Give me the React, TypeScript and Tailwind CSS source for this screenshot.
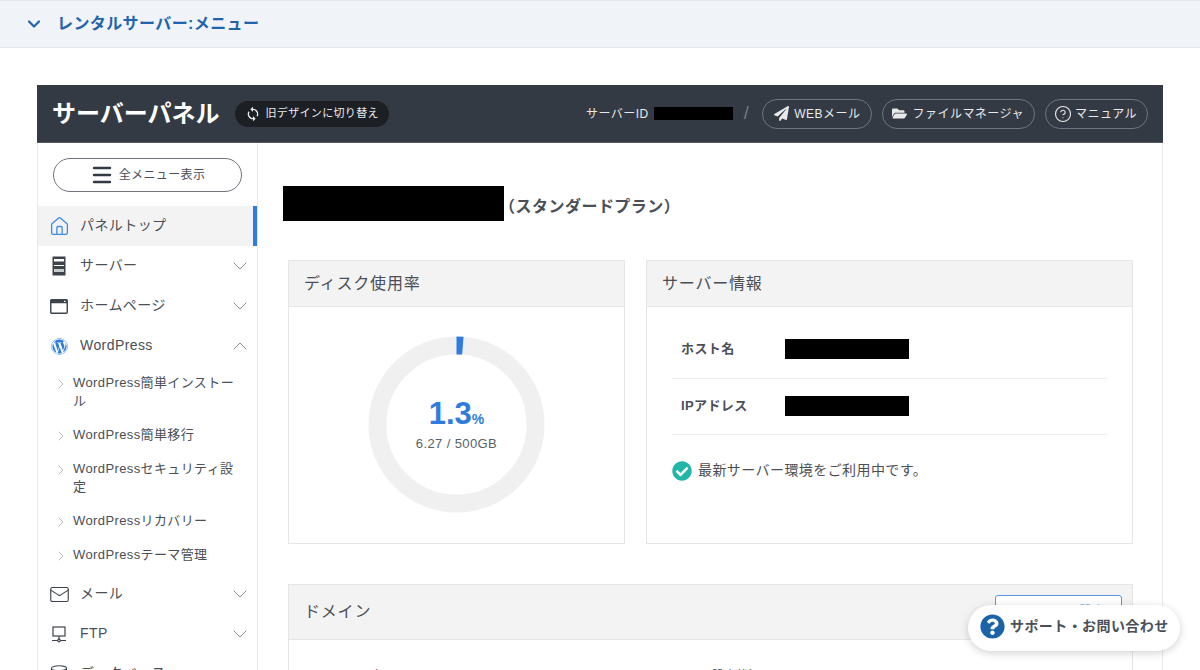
import { ChevronDown, ChevronRight, ChevronUp, CircleHelp, Database, House, Mail, Menu } from "lucide-react";
import { FaCheckCircle, FaFolderOpen, FaPaperPlane, FaQuestionCircle, FaWordpress } from "react-icons/fa";
import { MdSync } from "react-icons/md";

const subItems = [
  "WordPress簡単インストール",
  "WordPress簡単移行",
  "WordPressセキュリティ設定",
  "WordPressリカバリー",
  "WordPressテーマ管理",
];

function ServerIcon() {
  return (
    <svg width="14" height="20" viewBox="0 0 14 20">
      <rect x="0.5" y="0.5" width="13" height="19" fill="#3d434b" />
      <rect x="2" y="3" width="10" height="2.5" fill="#fff" />
      <rect x="2" y="9" width="10" height="1" fill="#fff" />
      <rect x="2" y="13" width="10" height="3" fill="#c9cbce" />
    </svg>
  );
}

function WindowIcon() {
  return (
    <svg width="18" height="15" viewBox="0 0 18 15">
      <rect x="0.75" y="0.75" width="16.5" height="13.5" rx="1" fill="#fff" stroke="#3d434b" strokeWidth="1.4" />
      <rect x="0.75" y="0.75" width="16.5" height="3.5" fill="#3d434b" />
      <rect x="14" y="1.8" width="1.5" height="1.2" fill="#fff" />
    </svg>
  );
}

function FtpIcon() {
  return (
    <svg width="16" height="17" viewBox="0 0 16 17" fill="none" stroke="#3d434b" strokeWidth="1.2">
      <rect x="2" y="1" width="12" height="9" />
      <path d="M8 10v3.5M1 14.5h14" />
      <circle cx="8" cy="14.5" r="1.3" fill="#fff" />
    </svg>
  );
}

function NavRow({ icon, label, open }: { icon: React.ReactNode; label: string; open?: boolean }) {
  return (
    <div className="flex h-10 items-center pr-[5px] text-[14px] tracking-[0.03em] text-[#4a4f57]">
      <div className="flex w-[42px] shrink-0 justify-center">{icon}</div>
      <span className="flex-1 pb-[2px]">{label}</span>
      {open ? (
        <ChevronUp size={24} strokeWidth={1} className="text-[#888]" />
      ) : (
        <ChevronDown size={24} strokeWidth={1} className="text-[#888]" />
      )}
    </div>
  );
}

function Sidebar() {
  return (
    <aside className="w-[220px] shrink-0 border-r border-[#e8e9eb]">
      <div className="px-[15px] pt-[15px] pb-[14px]">
        <div className="flex h-[34px] items-center justify-center gap-[5px] rounded-full border border-[#6f747b] text-[12px] tracking-[0.03em] text-[#4a4f57]">
          <Menu size={24} strokeWidth={2.4} className="text-[#343a43]" />
          <span>全メニュー表示</span>
        </div>
      </div>
      <div className="flex h-10 items-center border-r-[4px] border-[#2f7be0] bg-[#f3f3f3] text-[14px] tracking-[0.03em] text-[#4a4f57]">
        <div className="flex w-[42px] shrink-0 justify-center">
          <House size={21} strokeWidth={1.5} className="text-[#3f8ae8]" />
        </div>
        <span className="pb-[2px]">パネルトップ</span>
      </div>
      <NavRow icon={<ServerIcon />} label="サーバー" />
      <NavRow icon={<WindowIcon />} label="ホームページ" />
      <NavRow icon={<FaWordpress size={17} className="text-[#2f7be0]" />} label="WordPress" open />
      <div className="pb-[2px]">
        {subItems.map((item) => (
          <div key={item} className="flex py-[8px] pr-[20px] pl-[15px] text-[13px] leading-[18px] tracking-[0.03em] text-[#4a4f57]">
            <ChevronRight size={16} strokeWidth={1} className="mt-[2px] mr-[4px] shrink-0 text-[#999]" />
            <span>{item}</span>
          </div>
        ))}
      </div>
      <NavRow icon={<Mail size={21} strokeWidth={1.3} className="text-[#3d434b]" />} label="メール" />
      <NavRow icon={<FtpIcon />} label="FTP" />
      <NavRow icon={<Database size={20} strokeWidth={1.3} className="text-[#3d434b]" />} label="データベース" />
    </aside>
  );
}

function Card({ title, className, children }: { title: string; className: string; children: React.ReactNode }) {
  return (
    <section className={`border border-[#e6e6e6] ${className}`}>
      <h2 className="flex h-[46px] items-center border-b border-[#e6e6e6] bg-[#f3f3f3] px-[15px] text-[16px] font-normal tracking-[0.05em] text-[#4a4f57]">
        {title}
      </h2>
      {children}
    </section>
  );
}

function DiskChart() {
  return (
    <div className="relative flex h-[234px] items-center justify-center">
      <svg width="177" height="177" viewBox="0 0 178 178">
        <circle cx="89" cy="89" r="79.5" fill="none" stroke="#f0f0f0" strokeWidth="18" />
        <circle
          cx="89"
          cy="89"
          r="79.5"
          fill="none"
          stroke="#2f7be0"
          strokeWidth="18"
          strokeDasharray="6.5 493"
          transform="rotate(-90 89 89)"
        />
      </svg>
      <div className="absolute inset-0 flex flex-col items-center justify-center pt-[2px]">
        <div className="font-bold leading-[32px] text-[#2f7be0]">
          <span className="text-[31px]">1.3</span>
          <span className="text-[14px]">%</span>
        </div>
        <div className="text-[13px] leading-[18px] tracking-[0.03em] text-[#5a5f66]">6.27 / 500GB</div>
      </div>
    </div>
  );
}

function InfoRow({ label, className }: { label: string; className: string }) {
  return (
    <div className={`flex h-[56px] items-center border-b border-[#ececec] pl-[9px] ${className}`}>
      <span className="w-[104px] text-[13px] font-bold tracking-[0.03em] text-[#4a4f57]">{label}</span>
      <div className="h-5 w-[124px] bg-black" />
    </div>
  );
}

export default function App() {
  return (
    <div className="relative h-[670px] overflow-hidden bg-white font-['Liberation_Sans','Noto_Sans_CJK_JP',sans-serif]">
      <div className="flex h-12 items-center gap-[13px] border-y border-[#e6e8eb] bg-[#f0f3f7] pl-[24px]">
        <ChevronDown size={20} strokeWidth={2.6} className="text-[#1f64ad]" />
        <span className="text-[16px] font-bold tracking-[0.025em] text-[#1f64ad]">レンタルサーバー:メニュー</span>
      </div>

      <div className="mx-[37px] mt-[37px] border-x border-[#e8e9eb]">
        <header className="-mx-px flex h-[58px] items-center border-b border-[#555a62] bg-[#343a43] pr-[15px] pl-[15px]">
          <h1 className="text-[24px] font-bold tracking-normal text-white">サーバーパネル</h1>
          <div className="ml-[15px] flex h-[26px] items-center gap-[5px] rounded-full bg-[#1c1f24] px-[10px] text-[11px] tracking-[0.03em] text-[#e8e9ea]">
            <MdSync size={16} />
            <span>旧デザインに切り替え</span>
          </div>
          <div className="ml-auto flex items-center text-[12px] tracking-[0.04em] text-[#e8e9ea]">
            <span>サーバーID</span>
            <div className="ml-[5px] h-[13px] w-[79px] bg-black" />
            <span className="mr-[13px] ml-[11px] text-[18px] font-light text-[#777c83]">/</span>
            <div className="flex h-[30px] items-center gap-[5px] rounded-full border border-[#70757c] pr-[11px] pl-[11px]">
              <FaPaperPlane size={15} />
              <span>WEBメール</span>
            </div>
            <div className="ml-[10px] flex h-[30px] items-center gap-[5px] rounded-full border border-[#70757c] pr-[10px] pl-[9px]">
              <FaFolderOpen size={15} />
              <span>ファイルマネージャ</span>
            </div>
            <div className="ml-[10px] flex h-[30px] items-center gap-[3px] rounded-full border border-[#70757c] pr-[10px] pl-[8px]">
              <CircleHelp size={18} strokeWidth={1.5} />
              <span>マニュアル</span>
            </div>
          </div>
        </header>

        <div className="flex">
          <Sidebar />
          <main className="min-w-0 flex-1 pr-[29px] pl-[30px]">
            <div className="mt-[43px] -ml-[5px] flex items-center">
              <div className="h-[35px] w-[221px] bg-black" />
              <span className="-ml-[5px] pt-[7px] text-[16px] font-bold tracking-[0.03em] text-[#4a4f57]">（スタンダードプラン）</span>
            </div>
            <div className="mt-[39px] flex gap-[21px]">
              <Card title="ディスク使用率" className="h-[284px] w-[337px]">
                <DiskChart />
              </Card>
              <Card title="サーバー情報" className="h-[284px] flex-1">
                <div className="px-[25px] pt-[16px]">
                  <InfoRow label="ホスト名" className="pb-[3px]" />
                  <InfoRow label="IPアドレス" className="pb-[1px]" />
                  <div className="mt-[25px] flex items-center gap-[6px] text-[14px] tracking-[0.03em] text-[#4a4f57]">
                    <FaCheckCircle size={20} className="text-[#20b7a9]" />
                    <span>最新サーバー環境をご利用中です。</span>
                  </div>
                </div>
              </Card>
            </div>
            <section className="mt-10 border border-[#e6e6e6]">
              <div className="flex h-[55px] items-start justify-between border-b border-[#e6e6e6] bg-[#f3f3f3] pr-[10px] pl-[15px]">
                <h2 className="mt-[15px] text-[16px] font-normal tracking-[0.05em] text-[#4a4f57]">ドメイン</h2>
                <div className="mt-[10px] flex h-[36px] w-[127px] justify-end rounded-[3px] border border-[#5a96e3] bg-white pt-[8px] pr-[16px] text-[13px] leading-[14px] text-[#8ab4ea]">
                  ドメイン設定
                </div>
              </div>
              <div className="flex pt-[27px] pl-[35px] text-[12px] text-[#4a4f57]">
                <span className="w-[388px]">ドメイン名</span>
                <span className="w-[247px]">設定状況</span>
                <span>メニュー</span>
              </div>
            </section>
          </main>
        </div>
      </div>

      <div className="absolute top-[605px] left-[968px] flex h-[46px] w-[212px] items-center gap-[5px] rounded-full bg-white pb-[4px] pl-[12px] text-[14px] font-bold tracking-[0.03em] text-[#4a4f57] shadow-[0_2px_8px_rgba(0,0,0,0.18)]">
        <FaQuestionCircle size={25} className="text-[#1a63a8]" />
        <span>サポート・お問い合わせ</span>
      </div>
    </div>
  );
}
